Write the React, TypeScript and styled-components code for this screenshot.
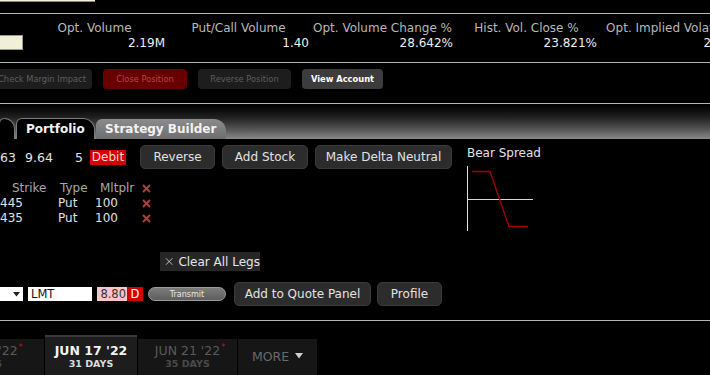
import React from "react";
import styled, { createGlobalStyle } from "styled-components";

const Global = createGlobalStyle`
  html, body { margin: 0; padding: 0; background: #000; }
  body { font-family: "DejaVu Sans", "Liberation Sans", sans-serif; color: #ddd; }
  * { box-sizing: border-box; }
`;

const Page = styled.div`
  width: 710px;
  height: 375px;
  overflow: hidden;
  background: #000;
  display: flex;
  flex-direction: column;
`;

const Rule = styled.div`
  height: 1px;
  flex: none;
  background: #b4b4b4;
`;

const TopStrip = styled.div`
  height: 13px;
  flex: none;
`;

const CreamBar = styled.div`
  width: 95px;
  height: 2px;
  background: #f1efd8;
  border-bottom: 1px solid #8a8a80;
`;

const StatsRow = styled.div`
  height: 48px;
  flex: none;
  display: grid;
  grid-template-columns: 24px repeat(4, 144px) 160px;
  align-items: stretch;
`;

const InputCell = styled.div`
  display: flex;
  align-items: flex-end;
  padding-bottom: 12px;
`;

const CreamInput = styled.div`
  width: 23px;
  height: 15px;
  background: #f1efd8;
  border: 1px solid #9a9a90;
  border-left: none;
`;

const Stat = styled.div`
  display: flex;
  flex-direction: column;
  padding: 7px 3px 0 0;
  white-space: nowrap;
`;

const StatLabel = styled.div`
  font-size: 12px;
  color: #b8b8b8;
  text-align: center;
  line-height: 15px;
`;

const StatValue = styled.div`
  font-size: 12px;
  color: #eee;
  text-align: right;
  line-height: 15px;
`;

const ActionRow = styled.div`
  height: 40px;
  flex: none;
  display: flex;
  align-items: flex-start;
  padding-top: 6px;
  gap: 11px;
  margin-left: -8px;
`;

const ActionButton = styled.div<{ $w: number; $kind: "off" | "danger" | "on" }>`
  width: ${(p) => p.$w}px;
  height: 20px;
  border-radius: 4px;
  display: flex;
  align-items: center;
  justify-content: center;
  font-size: 8.3px;
  white-space: nowrap;
  background: ${(p) => (p.$kind === "danger" ? "#680000" : p.$kind === "on" ? "#3c3c3c" : "#1d1d1d")};
  color: ${(p) => (p.$kind === "danger" ? "#b44848" : p.$kind === "on" ? "#fff" : "#5e5e5e")};
  font-weight: ${(p) => (p.$kind === "on" ? 700 : 400)};
`;

const TabBand = styled.div`
  height: 34px;
  flex: none;
  margin-top: 1px;
  background: linear-gradient(#000 0%, #1e1e1e 35%, #5a5a5a 75%, #8a8a8a 100%);
  display: flex;
  align-items: flex-end;
`;

const Tab = styled.div<{ $w: number; $active?: boolean }>`
  width: ${(p) => p.$w}px;
  height: ${(p) => (p.$active ? 21 : 20)}px;
  margin-right: 1px;
  border-radius: 6px 12px 0 0;
  display: flex;
  align-items: center;
  padding-left: 9px;
  font-size: 12px;
  font-weight: 700;
  color: #f2f2f2;
  white-space: nowrap;
  background: ${(p) => (p.$active ? "#000" : "linear-gradient(#8c8c8c, #6e6e6e)")};
  border: ${(p) => (p.$active ? "1px solid #7a7a7a" : "none")};
  border-bottom: none;
`;

const Content = styled.div`
  height: 181px;
  flex: none;
  display: flex;
`;

const LeftPane = styled.div`
  width: 463px;
  display: flex;
  flex-direction: column;
  padding-top: 6px;
`;

const SummaryRow = styled.div`
  height: 24px;
  display: flex;
  align-items: center;
  font-size: 12.5px;
  color: #e4e4e4;
`;

const Num = styled.span<{ $w: number }>`
  width: ${(p) => p.$w}px;
  flex: none;
  white-space: nowrap;
`;

const DebitTag = styled.span`
  width: 36px;
  height: 15px;
  background: #d40000;
  color: #f6d6d6;
  font-size: 12px;
  display: flex;
  align-items: center;
  justify-content: center;
`;

const ButtonGroup = styled.div`
  display: flex;
  gap: 7px;
  margin-left: 14px;
`;

const GreyButton = styled.div<{ $w: number }>`
  width: ${(p) => p.$w}px;
  height: 24px;
  border-radius: 5px;
  background: #2c2c2c;
  border: 1px solid #3a3a3a;
  color: #e2e2e2;
  font-size: 12px;
  display: flex;
  align-items: center;
  justify-content: center;
  white-space: nowrap;
`;

const Legs = styled.div`
  margin-top: 12px;
  display: grid;
  grid-template-columns: 56px 38px 46px 16px;
  grid-auto-rows: 15px;
  align-items: center;
  font-size: 12px;
`;

const Cell = styled.div<{ $indent: number; $head?: boolean }>`
  padding-left: ${(p) => p.$indent}px;
  color: ${(p) => (p.$head ? "#a8a8a8" : "#e0e0e0")};
  white-space: nowrap;
  line-height: 15px;
`;

const RemoveX = styled.div`
  padding-left: 2px;
  display: flex;
  align-items: center;
`;

const ClearRow = styled.div`
  margin-top: 26px;
  padding-left: 160px;
  display: flex;
`;

const ClearButton = styled.div`
  width: 100px;
  height: 19px;
  background: #262626;
  color: #e6e6e6;
  font-size: 12px;
  display: flex;
  align-items: center;
  gap: 5px;
  padding-left: 5px;
  white-space: nowrap;
`;

const OrderRow = styled.div`
  margin-top: 11px;
  height: 24px;
  display: flex;
  align-items: center;
`;

const Select = styled.div`
  width: 23px;
  height: 14px;
  background: #fff;
  display: flex;
  align-items: center;
  justify-content: flex-end;
  padding-right: 3px;
`;

const TextBox = styled.div`
  width: 64px;
  height: 14px;
  margin-left: 5px;
  background: #fff;
  color: #111;
  font-size: 11.5px;
  padding-left: 3px;
  display: flex;
  align-items: center;
`;

const PriceBox = styled.div`
  width: 30px;
  height: 14px;
  margin-left: 5px;
  background: #f7c6c8;
  color: #333;
  font-size: 11.5px;
  display: flex;
  align-items: center;
  justify-content: flex-end;
  padding-right: 1px;
`;

const SideBox = styled.div`
  width: 16px;
  height: 14px;
  background: #d40000;
  color: #fff;
  font-size: 11.5px;
  display: flex;
  align-items: center;
  justify-content: center;
`;

const TransmitButton = styled.div`
  width: 78px;
  height: 14px;
  margin-left: 5px;
  margin-right: 8px;
  border-radius: 7px;
  background: linear-gradient(#7c7c7c, #5e5e5e);
  border: 1px solid #9a9a9a;
  color: #e8e8e8;
  font-size: 8px;
  display: flex;
  align-items: center;
  justify-content: center;
`;

const OrderButtons = styled.div`
  display: flex;
  gap: 6px;
`;

const ChartPane = styled.div`
  padding: 6px 0 0 4px;
  display: flex;
  flex-direction: column;
`;

const ChartTitle = styled.div`
  font-size: 12px;
  color: #e4e4e4;
  line-height: 16px;
`;

const ChartSvg = styled.svg`
  margin-top: 4px;
`;

const ExpiryRow = styled.div`
  height: 54px;
  flex: none;
  display: flex;
  align-items: flex-end;
  margin-left: -78px;
  gap: 1px;
`;

const ExpiryTab = styled.div<{ $w: number; $active?: boolean }>`
  width: ${(p) => p.$w}px;
  height: ${(p) => (p.$active ? 40 : 36)}px;
  background: ${(p) => (p.$active ? "#1d1d1d" : "#161616")};
  border-top: ${(p) => (p.$active ? "2px solid #3a3a3a" : "none")};
  display: flex;
  flex-direction: column;
  align-items: center;
  justify-content: center;
  padding-bottom: ${(p) => (p.$active ? 0 : 2)}px;
  white-space: nowrap;
`;

const ExpiryDate = styled.div<{ $active?: boolean }>`
  font-size: 12.5px;
  line-height: 15px;
  font-weight: ${(p) => (p.$active ? 700 : 400)};
  color: ${(p) => (p.$active ? "#f2f2f2" : "#5a5a5a")};
  position: relative;
`;

const Star = styled.span`
  position: absolute;
  top: -3px;
  right: -5px;
  color: #b02020;
  font-size: 8px;
`;

const ExpiryDays = styled.div<{ $active?: boolean }>`
  font-size: 9.5px;
  line-height: 12px;
  font-weight: 700;
  color: ${(p) => (p.$active ? "#dcdcdc" : "#4a4a4a")};
`;

const MoreLabel = styled.div`
  font-size: 12.5px;
  color: #6a6a6a;
  display: flex;
  align-items: center;
  gap: 6px;
`;

const stats = [
  { label: "Opt. Volume", value: "2.19M" },
  { label: "Put/Call Volume", value: "1.40" },
  { label: "Opt. Volume Change %", value: "28.642%" },
  { label: "Hist. Vol. Close %", value: "23.821%" },
  { label: "Opt. Implied Volatility %", value: "24.118%" },
];

const legs = [
  { strike: "445", type: "Put", mult: "100" },
  { strike: "435", type: "Put", mult: "100" },
];

const XMark = () => (
  <svg width="9" height="9" viewBox="0 0 9 9">
    <path d="M1 1 L8 8 M8 1 L1 8" stroke="#a4453f" strokeWidth="2" />
  </svg>
);

export default function App() {
  return (
    <Page>
      <Global />
      <TopStrip>
        <CreamBar />
      </TopStrip>
      <Rule />
      <StatsRow>
        <InputCell>
          <CreamInput />
        </InputCell>
        {stats.map((s) => (
          <Stat key={s.label}>
            <StatLabel>{s.label}</StatLabel>
            <StatValue>{s.value}</StatValue>
          </Stat>
        ))}
      </StatsRow>
      <Rule />
      <ActionRow>
        <ActionButton $w={100} $kind="off">Check Margin Impact</ActionButton>
        <ActionButton $w={84} $kind="danger">Close Position</ActionButton>
        <ActionButton $w={93} $kind="off">Reverse Position</ActionButton>
        <ActionButton $w={81} $kind="on">View Account</ActionButton>
      </ActionRow>
      <Rule />
      <TabBand>
        <Tab $w={16} $active style={{ marginLeft: -1 }} />
        <Tab $w={79} $active>Portfolio</Tab>
        <Tab $w={130}>Strategy Builder</Tab>
      </TabBand>
      <Content>
        <LeftPane>
          <SummaryRow>
            <Num $w={25}>63</Num>
            <Num $w={50}>9.64</Num>
            <Num $w={15}>5</Num>
            <DebitTag>Debit</DebitTag>
            <ButtonGroup>
              <GreyButton $w={75}>Reverse</GreyButton>
              <GreyButton $w={86}>Add Stock</GreyButton>
              <GreyButton $w={137}>Make Delta Neutral</GreyButton>
            </ButtonGroup>
          </SummaryRow>
          <Legs>
            <Cell $indent={12} $head>Strike</Cell>
            <Cell $indent={4} $head>Type</Cell>
            <Cell $indent={6} $head>Mltplr</Cell>
            <RemoveX><XMark /></RemoveX>
            {legs.map((l) => (
              <React.Fragment key={l.strike}>
                <Cell $indent={0}>{l.strike}</Cell>
                <Cell $indent={2}>{l.type}</Cell>
                <Cell $indent={1}>{l.mult}</Cell>
                <RemoveX><XMark /></RemoveX>
              </React.Fragment>
            ))}
          </Legs>
          <ClearRow>
            <ClearButton>
              <svg width="13" height="13" viewBox="0 0 13 13">
                <path d="M1.5 1.5 L11.5 11.5 M11.5 1.5 L1.5 11.5" stroke="#e6e6e6" strokeWidth="1.2" />
              </svg>
              Clear All Legs
            </ClearButton>
          </ClearRow>
          <OrderRow>
            <Select>
              <svg width="7" height="5" viewBox="0 0 7 5">
                <path d="M0 0 H7 L3.5 4.5 Z" fill="#222" />
              </svg>
            </Select>
            <TextBox>LMT</TextBox>
            <PriceBox>8.80</PriceBox>
            <SideBox>D</SideBox>
            <TransmitButton>Transmit</TransmitButton>
            <OrderButtons>
              <GreyButton $w={137}>Add to Quote Panel</GreyButton>
              <GreyButton $w={65}>Profile</GreyButton>
            </OrderButtons>
          </OrderRow>
        </LeftPane>
        <ChartPane>
          <ChartTitle>Bear Spread</ChartTitle>
          <ChartSvg width="72" height="72" viewBox="0 0 72 72">
            <path d="M0.5 1 V66" stroke="#e0e0e0" strokeWidth="1" />
            <path d="M0 34.5 H66" stroke="#d8d8d8" strokeWidth="1" />
            <path d="M5 6.5 H23 L42 61.5 H61" stroke="#a80000" strokeWidth="1.3" fill="none" />
          </ChartSvg>
        </ChartPane>
      </Content>
      <Rule />
      <ExpiryRow>
        <ExpiryTab $w={122}>
          <ExpiryDate>MAY 20 '22<Star>*</Star></ExpiryDate>
          <ExpiryDays>3 DAYS</ExpiryDays>
        </ExpiryTab>
        <ExpiryTab $w={92} $active>
          <ExpiryDate $active>JUN 17 '22</ExpiryDate>
          <ExpiryDays $active>31 DAYS</ExpiryDays>
        </ExpiryTab>
        <ExpiryTab $w={99}>
          <ExpiryDate>JUN 21 '22<Star>*</Star></ExpiryDate>
          <ExpiryDays>35 DAYS</ExpiryDays>
        </ExpiryTab>
        <ExpiryTab $w={79}>
          <MoreLabel>
            MORE
            <svg width="8" height="6" viewBox="0 0 8 6">
              <path d="M0 0 H8 L4 5.5 Z" fill="#cfcfcf" />
            </svg>
          </MoreLabel>
        </ExpiryTab>
      </ExpiryRow>
      <Rule />
    </Page>
  );
}
